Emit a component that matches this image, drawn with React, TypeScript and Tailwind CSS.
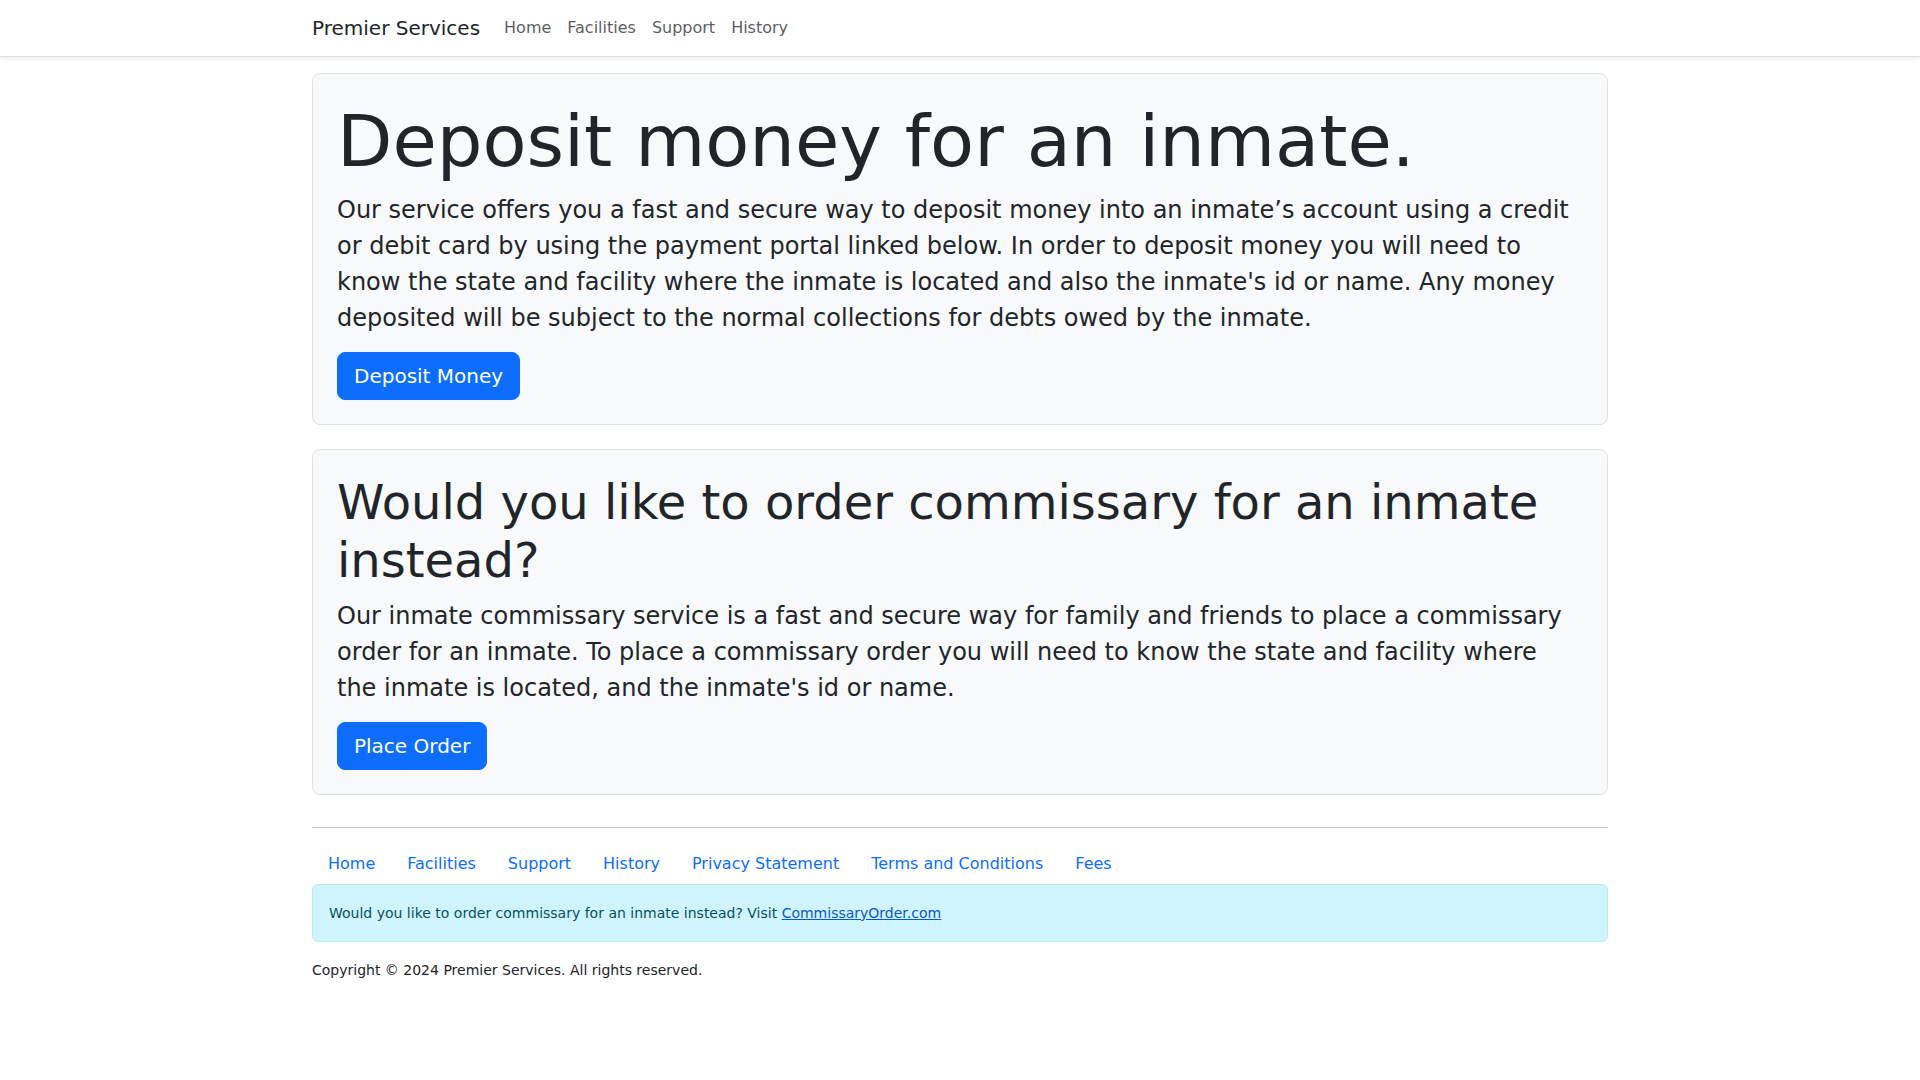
import React from 'react';

const navLinks = ['Home', 'Facilities', 'Support', 'History'];
const footerLinks = ['Home', 'Facilities', 'Support', 'History', 'Privacy Statement', 'Terms and Conditions', 'Fees'];

interface PanelProps {
  title: string;
  titleClass: string;
  body: string;
  action: string;
}

const Panel = ({ title, titleClass, body, action }: PanelProps) => (
  <div className="mb-6 rounded-[8px] border border-[#dee2e6] bg-[#f8f9fa] p-6">
    <h1 className={`mb-2 font-normal leading-[1.2] ${titleClass}`}>{title}</h1>
    <p className="mb-4 text-[24px] leading-[36px]">{body}</p>
    <button
      type="button"
      className="rounded-[8px] border border-[#0d6efd] bg-[#0d6efd] px-4 py-2 text-[20px] leading-[30px] text-white"
    >
      {action}
    </button>
  </div>
);

const App = () => {
  return (
    <div className="min-h-screen bg-white text-[#212529]" style={{ fontFamily: '"DejaVu Sans", sans-serif' }}>
      {/* Top navbar */}
      <nav className="h-[57px] border-b border-[#dee2e6] bg-white shadow-[0_2px_4px_rgba(0,0,0,0.075)]">
        <div className="mx-auto flex h-14 w-[1296px] items-center">
          <a href="#" className="mr-4 py-[5px] text-[20px] leading-[30px] text-[#212529]">
            Premier Services
          </a>
          <div className="flex">
            {navLinks.map((link) => (
              <a key={link} href="#" className="px-2 py-2 text-[16px] leading-6 text-[rgba(33,37,41,0.75)]">
                {link}
              </a>
            ))}
          </div>
        </div>
      </nav>

      <main className="mx-auto w-[1296px] pt-4">
        <Panel
          title="Deposit money for an inmate."
          titleClass="text-[72px]"
          body="Our service offers you a fast and secure way to deposit money into an inmate’s account using a credit or debit card by using the payment portal linked below. In order to deposit money you will need to know the state and facility where the inmate is located and also the inmate's id or name. Any money deposited will be subject to the normal collections for debts owed by the inmate."
          action="Deposit Money"
        />
        <Panel
          title="Would you like to order commissary for an inmate instead?"
          titleClass="text-[48px]"
          body="Our inmate commissary service is a fast and secure way for family and friends to place a commissary order for an inmate. To place a commissary order you will need to know the state and facility where the inmate is located, and the inmate's id or name."
          action="Place Order"
        />

        {/* Footer */}
        <footer className="pt-[8px] pb-10">
          <hr className="mb-4 border-0 border-t border-[#c8c9ca]" />
          <div className="flex">
            {footerLinks.map((link) => (
              <a key={link} href="#" className="px-4 py-2 text-[16px] leading-6 text-[#0d6efd]">
                {link}
              </a>
            ))}
          </div>
          <div className="mb-[18px] rounded-[6px] border border-[#b6effb] bg-[#cff4fc] px-4 pt-[17px] pb-4 text-[14px] leading-[23px] text-[#055160]">
            Would you like to order commissary for an inmate instead? Visit{' '}
            <a href="#" className="text-[#0a58ca] underline">
              CommissaryOrder.com
            </a>
          </div>
          <p className="text-[14px] leading-[21px]">Copyright © 2024 Premier Services. All rights reserved.</p>
        </footer>
      </main>
    </div>
  );
};

export default App;
